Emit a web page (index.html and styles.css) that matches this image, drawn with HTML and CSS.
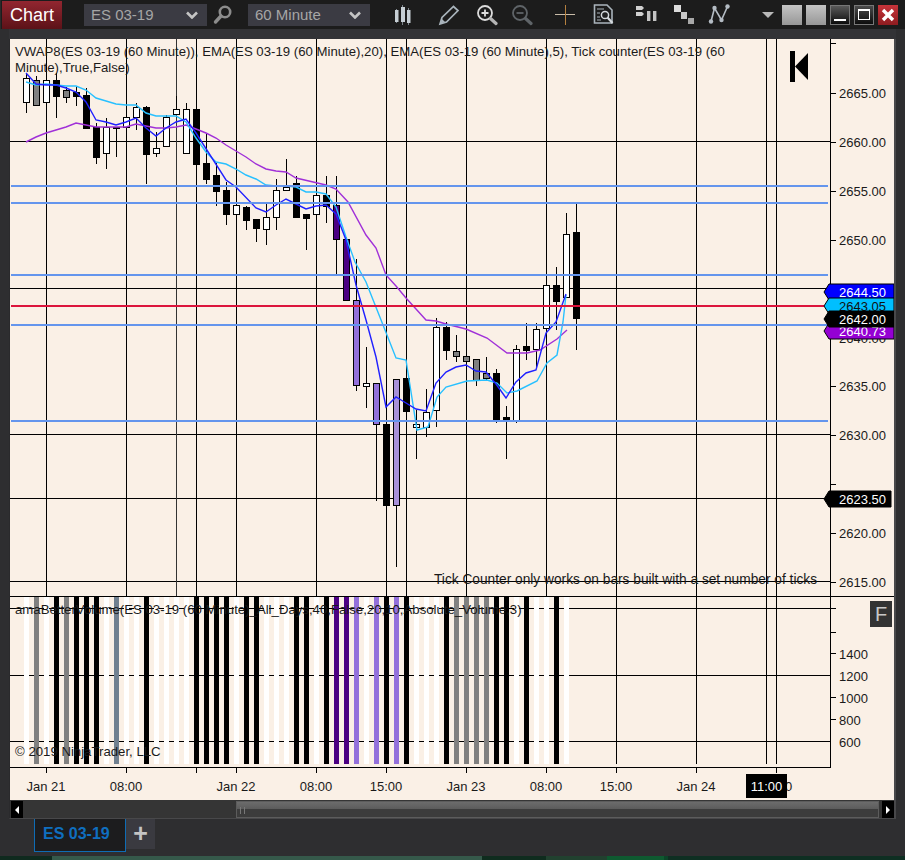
FILE: index.html
```html
<!DOCTYPE html>
<html lang="en">

<head>
    <meta charset="UTF-8">
    <title>Chart - ES 03-19</title>
    <link rel="stylesheet" href="styles.css">
</head>

<body>
    <div class="toolbar">
        <div class="title-tab">Chart</div>
        <div class="picker picker-instrument">
            <span>ES 03-19</span>
            <svg width="12" height="8" viewBox="0 0 12 8"><path d="M1 1.5 6 6.5 11 1.5" fill="none" stroke="#c4c4c4" stroke-width="2.6"/></svg>
        </div>
        <svg class="search" width="20" height="22" viewBox="0 0 20 22">
            <circle cx="12" cy="8" r="5.2" fill="none" stroke="#8c8c8c" stroke-width="2.6"/>
            <path d="M8 12 2.5 18" stroke="#8c8c8c" stroke-width="3.4" stroke-linecap="round"/>
        </svg>
        <div class="picker picker-interval">
            <span>60 Minute</span>
            <svg width="12" height="8" viewBox="0 0 12 8"><path d="M1 1.5 6 6.5 11 1.5" fill="none" stroke="#c4c4c4" stroke-width="2.6"/></svg>
        </div>

        <svg class="tool t-candles" width="22" height="22" viewBox="0 0 22 22">
            <path d="M5.5 5V19M11.5 1V21M17.5 4V21" stroke="#7d858c"/>
            <rect x="4" y="6" width="3.5" height="12" fill="#c6ced4"/>
            <rect x="10" y="3" width="4" height="15" fill="#c6ced4"/>
            <rect x="16" y="6" width="3.5" height="13" fill="#c6ced4"/>
        </svg>
        <svg class="tool t-pencil" width="22" height="22" viewBox="0 0 22 22">
            <path d="M2 20 4 13.5 15.5 2.5 20 6.5 8.5 18Z" fill="none" stroke="#a9b4bc" stroke-width="1.7"/>
            <path d="M2 20 4 15 7 18Z" fill="#a9b4bc"/>
        </svg>
        <svg class="tool t-zoomin" width="22" height="22" viewBox="0 0 22 22">
            <circle cx="9" cy="9" r="7" fill="none" stroke="#dcdcdc" stroke-width="1.8"/>
            <path d="M5.5 9H12.5M9 5.5V12.5" stroke="#dcdcdc" stroke-width="1.8"/>
            <path d="M14.5 14.5 20 19.5" stroke="#b4b4b4" stroke-width="3.2" stroke-linecap="round"/>
        </svg>
        <svg class="tool t-zoomout" width="22" height="22" viewBox="0 0 22 22">
            <circle cx="9" cy="9" r="7" fill="none" stroke="#5f6468" stroke-width="1.8"/>
            <path d="M5.5 9H12.5" stroke="#5f6468" stroke-width="1.8"/>
            <path d="M14.5 14.5 20 19.5" stroke="#5f6468" stroke-width="3.2" stroke-linecap="round"/>
        </svg>
        <svg class="tool t-cross" width="22" height="22" viewBox="0 0 22 22">
            <path d="M1 10.5H21" stroke="#c9bca8"/>
            <path d="M11.5 1V21" stroke="#b5803f"/>
        </svg>
        <svg class="tool t-data" width="22" height="22" viewBox="0 0 22 22">
            <path d="M1.5 1H14L19 6V19H1.5Z" fill="none" stroke="#aab4bc" stroke-width="1.6"/>
            <path d="M4 5H11M4 9H7M4 13H7M4 16H8" stroke="#aab4bc" stroke-width="1.2"/>
            <circle cx="12" cy="11" r="3.6" fill="#202020" stroke="#d4d8dc" stroke-width="1.5"/>
            <path d="M14.5 13.5 19.5 19" stroke="#d4d8dc" stroke-width="2.2"/>
        </svg>
        <svg class="tool t-pause" width="22" height="22" viewBox="0 0 22 22">
            <path d="M1 2H7L9 4 7 6H1ZM1 8H7L9 10 7 12H1Z" fill="#d0d0d0"/>
            <rect x="12" y="7" width="3.4" height="10" fill="#c4c4c4"/>
            <rect x="18" y="7" width="3.4" height="10" fill="#c4c4c4"/>
        </svg>
        <svg class="tool t-steps" width="22" height="22" viewBox="0 0 22 22">
            <rect x="1" y="1" width="7" height="7" fill="#dcdcdc"/>
            <rect x="8" y="8" width="6" height="7" fill="#c8c8c8"/>
            <rect x="15" y="14" width="6" height="6" fill="#a8a8a8"/>
        </svg>
        <svg class="tool t-nodes" width="22" height="22" viewBox="0 0 22 22">
            <path d="M3 17.5 6.5 4 13.5 16 19.5 2.5" fill="none" stroke="#b4bcc4" stroke-width="1.6"/>
            <circle cx="3" cy="17.5" r="2.2" fill="#b4bcc4"/>
            <circle cx="6.5" cy="4" r="2.2" fill="#b4bcc4"/>
            <circle cx="13.5" cy="16" r="2.2" fill="#b4bcc4"/>
            <circle cx="19.5" cy="2.5" r="2.2" fill="#b4bcc4"/>
        </svg>

        <div class="dropdown-arrow"></div>
        <div class="win-btn win-grey"></div>
        <div class="win-btn win-grey"></div>
        <div class="win-btn win-min"><i></i></div>
        <div class="win-btn win-max"><i></i></div>
        <div class="win-btn win-close">
            <svg width="14" height="14" viewBox="0 0 14 14"><path d="M2 2 12 12M12 2 2 12" stroke="#fff" stroke-width="3.4"/></svg>
        </div>
    </div>

    <div class="main">
        <!-- viewBox uses window coordinates, so the chart numbers read like the picture -->
        <svg id="chart" class="chart" width="884" height="761" viewBox="10 39 884 761"></svg>
        <div class="scrollbar">
            <div class="scroll-btn"><i class="arrow-left"></i></div>
            <div class="scroll-track">
                <div class="scroll-thumb"><i></i><i></i></div>
            </div>
            <div class="scroll-btn"><i class="arrow-right"></i></div>
        </div>
    </div>

    <div class="tabs">
        <div class="tab">ES 03-19</div>
        <div class="tab-add">+</div>
    </div>

    <div class="taskbar">
        <div class="seg-a"></div>
        <div class="seg-b"></div>
        <div class="seg-a2"></div>
        <div class="seg-c"></div>
        <div class="seg-d"></div>
        <div class="seg-e"></div>
        <div class="seg-f"></div>
    </div>

    <script src="chart.js"></script>
</body>

</html>
```

FILE: styles.css
```css
* {
    margin: 0px;
    padding: 0px;
    box-sizing: border-box;
}

body {
    width: 905px;
    height: 860px;
    overflow: hidden;
    background: #2e2e30;
    font-family: "Liberation Sans", Arial, sans-serif;
}

/* top bar */

.toolbar {
    height: 29px;
    background: #1c1c1c;
    display: flex;
    align-items: center;
    padding-left: 1px;
    border-left: 1px solid #2a2a2a;
}

.title-tab {
    width: 60px;
    height: 28px;
    margin-top: 1px;
    background: linear-gradient(#922630, #5c1218);
    color: #fff;
    font-size: 18px;
    line-height: 28px;
    text-align: center;
}

.picker {
    height: 22px;
    background: #3b3b43;
    color: #a6a6a6;
    font-size: 15px;
    line-height: 22px;
    padding: 0px 9px 0px 7px;
    display: flex;
    align-items: center;
    justify-content: space-between;
}

.picker-instrument {
    width: 123px;
    margin-left: 22px;
}

.picker-interval {
    width: 122px;
    margin-left: 15px;
}

.search {
    margin-left: 6px;
}

.t-candles {
    margin-left: 21px;
}

.t-pencil {
    margin-left: 25px;
}

.t-zoomin {
    margin-left: 16px;
}

.t-zoomout {
    margin-left: 13px;
}

.t-cross {
    margin-left: 21px;
}

.t-data {
    margin-left: 17px;
}

.t-pause {
    margin-left: 20px;
}

.t-steps {
    margin-left: 16px;
}

.t-nodes {
    margin-left: 13px;
}

.dropdown-arrow {
    width: 0px;
    height: 0px;
    margin-left: 32px;
    border-left: 6px solid transparent;
    border-right: 6px solid transparent;
    border-top: 6px solid #b8b8b8;
}

.win-btn {
    width: 20px;
    height: 20px;
    margin-left: 4px;
    display: flex;
    align-items: center;
    justify-content: center;
}

.dropdown-arrow + .win-btn {
    margin-left: 8px;
}

.win-grey {
    background: linear-gradient(#c4c4c4, #979797);
}

.win-min {
    background: linear-gradient(#5a5a5a, #0c0c0c);
    border: 1px solid #777;
    align-items: flex-end;
    padding-bottom: 3px;
}

.win-min i {
    display: block;
    width: 12px;
    height: 2px;
    background: #fff;
}

.win-max {
    background: linear-gradient(#4a4a4a, #0c0c0c);
    border: 1px solid #777;
}

.win-max i {
    display: block;
    width: 12px;
    height: 11px;
    border: 1px solid #fff;
    border-top-width: 2px;
}

.win-close {
    background: linear-gradient(#c8343a, #8e1c20);
}

/* chart window */

.main {
    margin: 10px 9px 0px 9px;
    border-left: 1px solid #2a2a2c;
    border-right: 2px solid #48484a;
    border-bottom: 1px solid #48484a;
    background: #333;
}

.toolbar + .main {
    box-shadow: 0px -10px 0px #333336;
}

.chart {
    display: block;
    background: #faf0e6;
}

.chart text {
    font-family: "Liberation Sans", Arial, sans-serif;
    font-size: 13px;
    fill: #1a1a1a;
}

.chart .legend {
    font-size: 13.2px;
}

.chart .tick-note {
    font-size: 13.72px;
}

.chart .crisp {
    shape-rendering: crispEdges;
}

.chart .time-label {
    text-anchor: middle;
}

.chart .flag-text {
    fill: #fff;
}

.chart .flag-dark {
    fill: #111;
}

.chart .f-text {
    font-size: 20px;
    fill: #c8c8c8;
}

/* scrollbar under the chart */

.scrollbar {
    height: 18px;
    display: flex;
    padding-left: 1px;
    background: #353535;
}

.scroll-btn {
    width: 12px;
    height: 17px;
    margin-top: 1px;
    background: #000;
    display: flex;
    align-items: center;
    justify-content: center;
}

.arrow-left {
    border-top: 4px solid transparent;
    border-bottom: 4px solid transparent;
    border-right: 4px solid #fff;
}

.arrow-right {
    border-top: 4px solid transparent;
    border-bottom: 4px solid transparent;
    border-left: 4px solid #fff;
}

.scroll-track {
    flex: 1;
    padding: 1px 3px 0px 213px;
}

.scroll-thumb {
    height: 17px;
    border: 1px solid #5c5c5c;
    background: linear-gradient(#6c6c6c 0%, #5c5c5c 45%, #3c3c3c 50%, #3c3c3c 100%);
    display: flex;
    gap: 3px;
    padding: 5px 0px 3px 3px;
}

.scroll-thumb i {
    display: block;
    width: 1px;
    background: #777;
}

/* tabs */

.tabs {
    height: 37px;
    display: flex;
    align-items: flex-start;
    padding-left: 34px;
}

.tab {
    width: 92px;
    height: 33px;
    background: #1c1c1e;
    border: 1px solid #0f6cb4;
    border-top: none;
    color: #0f6fc0;
    font-size: 16px;
    font-weight: bold;
    line-height: 30px;
    padding-left: 8px;
}

.tab-add {
    width: 29px;
    height: 30px;
    background: #3a3a40;
    color: #c4c4c4;
    font-size: 25px;
    font-weight: bold;
    line-height: 28px;
    text-align: center;
}

/* strip of the desktop under the window */

.taskbar {
    height: 5px;
    display: flex;
}

.seg-a {
    width: 52px;
    background: #0f2a1e;
}

.seg-b {
    width: 430px;
    background: #35594a;
}

.seg-a2 {
    width: 64px;
    background: #0f2c1e;
}

.seg-c {
    width: 61px;
    background: #21412f;
}

.seg-d {
    width: 57px;
    background: #0e5a30;
}

.seg-e {
    width: 4px;
    background: #0c4428;
}

.seg-f {
    flex: 1;
    background: #0e2f22;
}
```

FILE: chart.js
```js
const colors = {
    w: "#ffffff",
    k: "#000000",
    g: "#808080",
    s: "#708090",
    i: "#4b0082",
    m: "#9370db",
    l: "#a890d8"
};

// colour, wick top, body top, body bottom, wick bottom. one bar every 10px from x=26
const candles = [
    ["w", 73, 78, 102, 113], ["g", 76, 80, 105, 105], ["w", 75, 80, 102, 102], ["k", 73, 80, 96, 118],
    ["g", 87, 90, 97, 103], ["k", 86, 92, 96, 106], ["k", 88, 95, 128, 129], ["k", 123, 127, 157, 164],
    ["w", 118, 127, 153, 169], ["s", 127, 127, 128, 157], ["w", 117, 117, 127, 127], ["w", 103, 107, 117, 130],
    ["k", 106, 107, 154, 184], ["w", 132, 148, 153, 157], ["w", 115, 117, 146, 146], ["w", 96, 109, 114, 114],
    ["w", 103, 109, 153, 153], ["k", 109, 109, 164, 164], ["k", 133, 163, 179, 184], ["k", 163, 175, 191, 206],
    ["k", 182, 190, 214, 225], ["w", 197, 205, 214, 214], ["k", 206, 207, 220, 230], ["k", 219, 219, 228, 242],
    ["w", 202, 217, 229, 245], ["w", 179, 190, 217, 230], ["w", 159, 187, 190, 190], ["k", 176, 183, 217, 217],
    ["k", 214, 214, 218, 250], ["w", 195, 195, 214, 214], ["k", 176, 195, 206, 223], ["i", 176, 205, 239, 274],
    ["i", 237, 239, 300, 300], ["m", 259, 300, 385, 391], ["w", 347, 383, 386, 408], ["m", 383, 383, 424, 501],
    ["k", 424, 424, 505, 505], ["l", 379, 379, 505, 567], ["k", 352, 378, 411, 411], ["w", 410, 424, 427, 459],
    ["w", 389, 412, 427, 437], ["w", 318, 327, 410, 427], ["k", 322, 327, 350, 360], ["g", 335, 351, 356, 362],
    ["g", 356, 356, 361, 361], ["g", 359, 359, 380, 386], ["g", 357, 373, 378, 381], ["k", 369, 373, 420, 423],
    ["k", 406, 417, 421, 459], ["w", 345, 349, 420, 423], ["k", 323, 346, 350, 360], ["w", 323, 329, 349, 369],
    ["w", 271, 285, 328, 328], ["k", 267, 285, 301, 330], ["w", 213, 234, 297, 297], ["k", 204, 232, 318, 350]
];

// the volume panel stops one bar earlier than the candles
const volume = "wgwkgkkkwswwkwwwwkkkkwkkwwwkkwkiimwmkmkwwwkggggkkwkwwkw";

const vwapLine = "26,142 36,137 46,133 56,130 66,127 76,123 86,125 96,127 106,127 116,127 126,127 136,124 146,126 156,128 166,128 176,127 186,125 196,129 206,133 216,138 226,145 236,151 246,157 256,164 266,169 276,171 286,172 296,178 326,185 336,189 348,202 366,235 376,248 386,275 396,286 406,298 416,309 426,320 436,321 446,324 466,329 487,338 507,353 527,353 540,350 557,339 567,330";
const ema20Line = "26,82 36,85 46,84 56,85 66,86 76,86 86,90 96,98 106,101 116,104 126,105 136,105 146,113 156,116 166,116 176,116 186,122 196,138 206,152 216,162 226,164 236,169 246,175 256,179 266,185 276,186 286,186 296,187 306,192 316,192 326,194 336,207 346,237 355,262 366,282 385,330 396,358 406,360 417,430 428,427 437,397 446,387 467,381 487,380 497,383 507,393 517,391 537,381 547,363 557,355 563,322 566,295";
const ema5Line = "26,73 36,84 46,85 56,85 66,88 76,92 86,102 96,120 106,122 116,125 126,122 136,118 146,128 156,136 166,128 176,122 186,119 196,133 226,180 236,187 256,208 266,212 276,205 286,199 296,204 306,209 316,206 326,205 336,214 346,240 356,285 366,320 376,357 386,407 396,397 406,403 416,409 426,411 436,383 446,372 456,367 466,365 476,371 486,372 496,384 506,398 516,382 526,373 536,370 546,333 556,322 566,294";

const gridX = [46, 126, 176, 196, 236, 316, 386, 406, 466, 546, 616, 696, 766, 776];
const timeTicks = [46, 126, 196, 236, 316, 386, 466, 546, 616, 696, 776];
const timeLabels = [
    ["Jan 21", 46], ["08:00", 126], ["Jan 22", 236], ["08:00", 316], ["15:00", 386],
    ["Jan 23", 466], ["08:00", 546], ["15:00", 616], ["Jan 24", 696], ["00:00", 776]
];
const priceLabels = [
    ["2665.00", 93], ["2660.00", 142], ["2655.00", 191], ["2650.00", 240], ["2640.00", 338],
    ["2635.00", 386], ["2630.00", 435], ["2620.00", 533], ["2615.00", 582]
];
const volumeLabels = [["1400", 654], ["1200", 676], ["1000", 698], ["800", 720], ["600", 742]];

function hline(y, x1, x2, color) {
    return `<path class="crisp" d="M${x1} ${y + 0.5}H${x2}" stroke="${color || "#000"}"/>`;
}

function vline(x, y1, y2, color) {
    return `<path class="crisp" d="M${x + 0.5} ${y1}V${y2}" stroke="${color || "#000"}"/>`;
}

function flag(y, right, fill, label, textClass) {
    let points = `824,${y} 829,${y - 8} ${right},${y - 8} ${right},${y + 8} 829,${y + 8}`;
    return `<polygon points="${points}" fill="${fill}" stroke="#000"/>` +
        `<text class="${textClass}" x="839" y="${y + 5}">${label}</text>`;
}

let html = "";

// grid
[141, 288, 434, 498, 581, 608].forEach((y) => {
    html += hline(y, 10, y == 608 ? 836 : 830);
});
[675, 741].forEach((y) => {
    html += hline(y, 10, 830);
});
gridX.forEach((x) => {
    html += vline(x, 39, 764, x == 176 ? "#333" : "#000");
});

// volume bars
for (let i = 0; i < volume.length; i++) {
    html += `<rect class="crisp" x="${24 + i * 10}" y="596" width="5" height="168" fill="${colors[volume[i]]}"/>`;
}

// candles
for (let i = 0; i < candles.length; i++) {
    let c = candles[i];
    let x = 26 + i * 10;
    html += vline(x, c[1], c[4]);
    html += `<rect class="crisp" x="${x - 3 + 0.5}" y="${c[2] + 0.5}" width="6" height="${c[3] - c[2]}" fill="${colors[c[0]]}" stroke="#000"/>`;
}

// indicators
html += `<polyline points="${vwapLine}" fill="none" stroke="#a030d8" stroke-width="1.4"/>`;
html += `<polyline points="${ema20Line}" fill="none" stroke="#28c0ff" stroke-width="1.4"/>`;
html += `<polyline points="${ema5Line}" fill="none" stroke="#2020ff" stroke-width="1.4"/>`;

// drawn levels
[185, 202, 274, 324, 420].forEach((y) => {
    html += `<rect class="crisp" x="11" y="${y}" width="817" height="2" fill="#6495ed"/>`;
});
html += `<rect class="crisp" x="11" y="305" width="813" height="2" fill="#dc143c"/>`;

// panel divider and axes
html += hline(596, 10, 894);
html += hline(767, 10, 831);
html += vline(830, 39, 767);
[43, 93, 142, 191, 240, 289, 338, 386, 435, 484, 533, 582].forEach((y) => {
    html += hline(y, 830, 836);
});
[632, 653, 697, 719].forEach((y) => {
    html += hline(y, 830, 836);
});
timeTicks.forEach((x) => {
    html += vline(x, 767, 773);
});

// texts
html += `<text class="legend" x="15" y="56">VWAP8(ES 03-19 (60 Minute)), EMA(ES 03-19 (60 Minute),20), EMA(ES 03-19 (60 Minute),5), Tick counter(ES 03-19 (60</text>`;
html += `<text class="legend" x="15" y="72">Minute),True,False)</text>`;
html += `<text class="tick-note" x="434" y="584">Tick Counter only works on bars built with a set number of ticks</text>`;
html += `<text class="legend" x="15" y="614">amaBetterVolume(ES 03-19 (60 Minute)_All_Days,40,False,20,10,Absolute_Volume,3)</text>`;
html += `<text class="legend" x="15" y="756">© 2019 NinjaTrader, LLC</text>`;
priceLabels.concat(volumeLabels).forEach((p) => {
    html += `<text x="839" y="${p[1] + 5}">${p[0]}</text>`;
});
timeLabels.forEach((t) => {
    html += `<text class="time-label" x="${t[1]}" y="791">${t[0]}</text>`;
});

// marker at the top right
html += `<rect x="790" y="51" width="5" height="31" fill="#000"/>`;
html += `<polygon points="795,66.5 808,53 808,80" fill="#000"/>`;

// price flags
html += flag(292, 894, "#0000ff", "2644.50", "flag-text");
html += flag(306, 894, "#00bfff", "2643.05", "flag-dark");
html += flag(331, 894, "#9400d3", "2640.73", "flag-text");
html += flag(319, 894, "#000000", "2642.00", "flag-text");
html += flag(499, 891, "#000000", "2623.50", "flag-text");

// current time on the axis
html += `<rect x="746" y="774" width="41" height="24" fill="#000"/>`;
html += `<text class="time-label flag-text" x="766.5" y="791">11:00</text>`;

// F button of the lower panel
html += `<rect x="870" y="601" width="22" height="26" fill="#333"/>`;
html += `<text class="f-text" x="875" y="621">F</text>`;

document.querySelector("#chart").innerHTML = html;
```
